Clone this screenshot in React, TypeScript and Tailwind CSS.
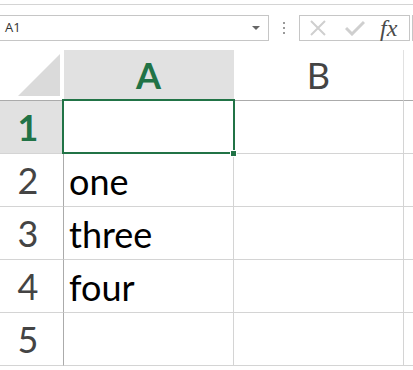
import React from "react";

const rows = [
  { n: "1", text: "", selected: true },
  { n: "2", text: "one" },
  { n: "3", text: "three" },
  { n: "4", text: "four" },
  { n: "5", text: "" },
];

const cellFont = { fontFamily: "Lato, 'Open Sans', sans-serif" };

const FormulaButtons = () => (
  <div className="flex items-center h-[26px] w-[111px] border border-[#c6c6c6] bg-white">
    {/* cancel */}
    <svg width="18" height="18" viewBox="0 0 18 18" className="ml-[9px]">
      <path d="M2 2 L16 16 M16 2 L2 16" stroke="#cfcfcf" strokeWidth="2" fill="none" />
    </svg>
    {/* enter */}
    <svg width="20" height="16" viewBox="0 0 20 16" className="ml-[18px]">
      <path d="M1 8 L7 14 L19 2" stroke="#cfcfcf" strokeWidth="3" fill="none" />
    </svg>
    <span
      className="ml-[15px] text-[24px] italic leading-none text-[#4a4a4a]"
      style={{ fontFamily: "'Liberation Serif', serif" }}
    >
      fx
    </span>
  </div>
);

export default function App() {
  return (
    <div className="relative w-[413px] h-[370px] overflow-hidden bg-white">
      {/* Formula bar */}
      <div className="h-[50px] pt-[4px]">
        <div className="border-t border-[#d4d4d4] pt-[10px] flex items-start">
          <div className="relative flex items-center h-[26px] w-[269px] border border-l-0 border-[#c6c6c6] pl-[5px]">
            <span className="text-[13px] text-[#333]" style={{ fontFamily: "'Open Sans', sans-serif" }}>
              A1
            </span>
            <span className="absolute right-[8px] top-[10px] w-0 h-0 border-l-[4px] border-r-[4px] border-t-[4px] border-l-transparent border-r-transparent border-t-[#666]" />
          </div>
          <div className="w-[30px] h-[26px] flex flex-col items-center justify-center gap-[3px] pr-[1px]">
            <span className="w-[2px] h-[2px] bg-[#9a9a9a]" />
            <span className="w-[2px] h-[2px] bg-[#9a9a9a]" />
            <span className="w-[2px] h-[2px] bg-[#9a9a9a]" />
          </div>
          <FormulaButtons />
          <div className="ml-[2px] w-px h-[26px] bg-[#c6c6c6]" />
        </div>
      </div>

      {/* Grid */}
      <div className="relative grid grid-cols-[64px_170px_170px_1fr]" style={cellFont}>
        {/* Header row */}
        <div className="h-[51px] border-b border-r border-b-[#ababab] border-r-white flex items-end justify-end pr-[3px] pb-[4px]">
          <svg width="42" height="42" viewBox="0 0 42 42">
            <polygon points="0,42 42,0 42,42" fill="#dadada" />
          </svg>
        </div>
        <div className="h-[51px] bg-[#e1e1e1] border-b border-b-[#ababab] border-r border-r-[#e1e1e1] flex items-center justify-center text-[36px] font-bold text-[#217346]">
          A
        </div>
        <div className="h-[51px] border-b border-b-[#ababab] border-r border-r-[#e1e1e1] flex items-center justify-center text-[36px] text-[#444]">
          B
        </div>
        <div className="h-[51px] border-b border-b-[#ababab]" />

        {rows.map((r) => (
          <React.Fragment key={r.n}>
            <div
              className={`h-[53px] border-b border-b-[#d4d4d4] border-r border-r-[#ababab] flex items-end justify-center pr-[7px] pb-[8px] text-[36px] leading-none ${
                r.selected ? "bg-[#e1e1e1] font-bold text-[#217346]" : "text-[#444]"
              }`}
            >
              {r.n}
            </div>
            <div className="h-[53px] border-b border-r border-[#d4d4d4] flex items-end pl-[5px] pb-[7px] text-[36px] leading-none text-black">
              {r.text}
            </div>
            <div className="h-[53px] border-b border-r border-[#d4d4d4]" />
            <div className="h-[53px] border-b border-[#d4d4d4]" />
          </React.Fragment>
        ))}

        {/* Active cell selection */}
        <div className="absolute left-[62px] top-[49px] w-[173px] h-[55px] border-2 border-[#217346] pointer-events-none" />
        <div className="absolute left-[230px] top-[100px] w-[7px] h-[7px] bg-[#217346] border border-white pointer-events-none" />
      </div>
    </div>
  );
}
